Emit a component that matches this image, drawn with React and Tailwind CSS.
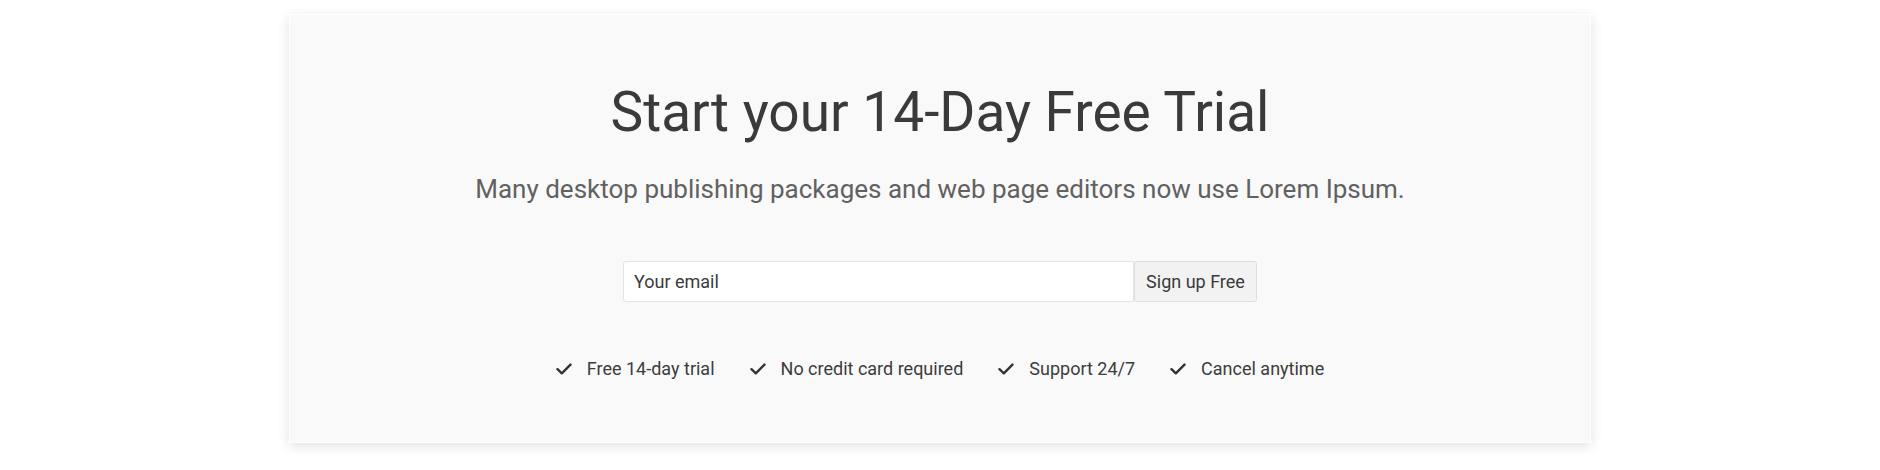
import React from "react";

const perks = ["Free 14-day trial", "No credit card required", "Support 24/7", "Cancel anytime"];

function CheckIcon() {
  return (
    <svg viewBox="0 0 16 12" className="w-[16px] h-[12px]" fill="none">
      <path d="M1.5 6.2 5.8 10.3 14.5 1.6" stroke="#333" strokeWidth="2.4" strokeLinecap="round" strokeLinejoin="round" />
    </svg>
  );
}

export default function App() {
  return (
    <div className="min-h-[470px] bg-white pt-[14px] font-['Roboto',sans-serif]">
      {/* Trial card */}
      <section className="mx-auto w-[1302px] h-[429px] bg-[#f9f9f9] border border-white shadow-[0_3px_12px_rgba(0,0,0,0.12)] pt-[64px] flex flex-col items-center">
        <h1 className="text-[55px] leading-[66px] font-normal text-[#3a3a3a]">Start your 14-Day Free Trial</h1>
        <p className="mt-[25px] text-[26px] leading-[39px] text-[#616161]">
          Many desktop publishing packages and web page editors now use Lorem Ipsum.
        </p>

        <form className="mt-[52px] flex" onSubmit={(e) => e.preventDefault()}>
          <input
            type="text"
            placeholder="Your email"
            className="w-[511px] h-[41px] bg-white border border-[#e4e4e4] rounded-l-[3px] px-[10px] text-[18px] text-[#333] placeholder:text-[#3a3a3a] outline-none"
          />
          <button
            type="submit"
            className="w-[123px] h-[41px] bg-[#f2f2f2] border border-[#dedede] rounded-[3px] text-[18px] text-[#3a3a3a]"
          >
            Sign up Free
          </button>
        </form>

        <ul className="mt-[53px] flex gap-[35px] text-[18px] leading-[27px] text-[#3c3c3c]">
          {perks.map((p) => (
            <li key={p} className="flex items-center gap-[15px]">
              <CheckIcon />
              <span>{p}</span>
            </li>
          ))}
        </ul>
      </section>
    </div>
  );
}
